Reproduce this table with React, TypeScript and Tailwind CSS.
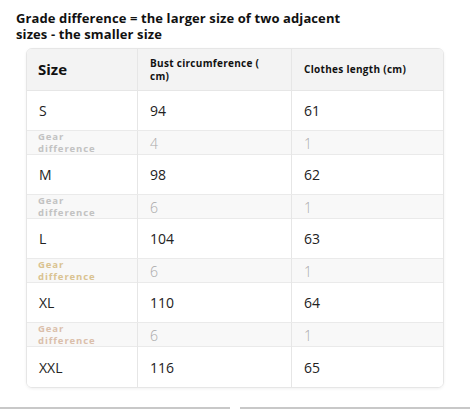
const rows = [
  { size: "S", bust: "94", len: "61" },
  { gear: true, bust: "4", len: "1", tone: "text-[#c2c2c2]" },
  { size: "M", bust: "98", len: "62" },
  { gear: true, bust: "6", len: "1", tone: "text-[#c2c2c2]" },
  { size: "L", bust: "104", len: "63" },
  { gear: true, bust: "6", len: "1", tone: "text-[#dac391]" },
  { size: "XL", bust: "110", len: "64" },
  { gear: true, bust: "6", len: "1", tone: "text-[#dbbfab]" },
  { size: "XXL", bust: "116", len: "65" },
];

export default function App() {
  return (
    <div
      className="relative w-[470px] h-[409px] bg-white overflow-hidden"
      style={{ fontFamily: '"Open Sans", "Noto Sans", sans-serif' }}
    >
      {/* Heading */}
      <h1 className="pl-4 pt-[10px] text-[13px] font-bold leading-[16px] tracking-[0.1px] text-[#111] w-[365px]">
        Grade difference = the larger size of two adjacent sizes - the smaller size
      </h1>

      {/* Size table */}
      <div className="ml-[26px] mt-[6px] w-[418px] rounded-md border border-[#e6e6e6] shadow-[0_1px_3px_rgba(0,0,0,0.06)] overflow-hidden">
        <div className="grid grid-cols-[110px_154px_154px] h-[42px] bg-[#f3f3f3] border-b border-[#e6e6e6] text-[#111]">
          <div className="flex items-center pl-[11px] text-[15px] font-bold">Size</div>
          <div className="flex items-center pl-3 pr-4 border-l border-[#e6e6e6] text-[10px] font-bold leading-[13px] tracking-[0.3px]">
            Bust circumference ( cm)
          </div>
          <div className="flex items-center pl-3 border-l border-[#e6e6e6] text-[10px] font-bold tracking-[0.3px]">
            Clothes length (cm)
          </div>
        </div>

        {rows.map((r, i) =>
          r.gear ? (
            <div
              key={i}
              className="grid grid-cols-[110px_154px_154px] h-[24px] bg-[#f8f8f8] border-b border-[#eaeaea]"
            >
              <div className={`flex flex-col justify-center pl-[11px] text-[9.5px] font-bold leading-[12px] tracking-[0.9px] ${r.tone}`}>
                <span>Gear</span>
                <span>difference</span>
              </div>
              <div className="flex items-center pl-3 border-l border-[#e6e6e6] text-[14px] text-[#a9a9a9] font-light">
                {r.bust}
              </div>
              <div className="flex items-center pl-3 border-l border-[#e6e6e6] text-[14px] text-[#a9a9a9] font-light">
                {r.len}
              </div>
            </div>
          ) : (
            <div
              key={i}
              className={`grid grid-cols-[110px_154px_154px] h-[40px] bg-white text-[14px] text-[#222] ${
                i < rows.length - 1 ? "border-b border-[#eaeaea]" : ""
              }`}
            >
              <div className="flex items-center pl-[12px]">{r.size}</div>
              <div className="flex items-center pl-3 border-l border-[#e6e6e6]">{r.bust}</div>
              <div className="flex items-center pl-3 border-l border-[#e6e6e6]">{r.len}</div>
            </div>
          )
        )}
      </div>

      {/* bottom edge of the next panel */}
      <div className="absolute left-0 right-0 bottom-0 flex gap-[10px]">
        <div className="flex-1 border-b-2 border-[#c8c8c8]" />
        <div className="flex-1 border-b-2 border-[#c8c8c8]" />
      </div>
    </div>
  );
}
